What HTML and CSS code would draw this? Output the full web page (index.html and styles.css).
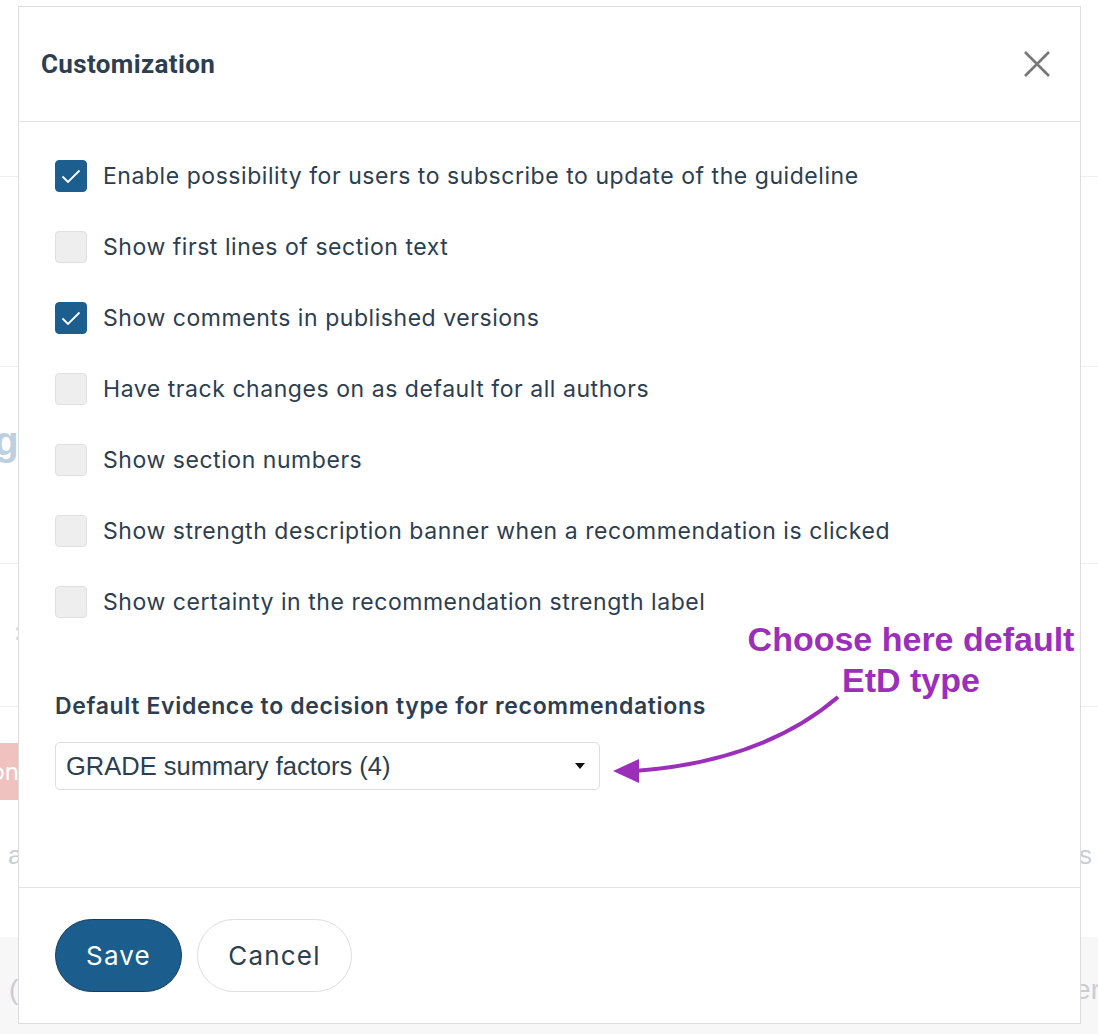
FILE: index.html
```html
<!DOCTYPE html>
<html>
<head>
<meta charset="utf-8">
<link rel="stylesheet" href="styles.css">
</head>
<body>
<div class="page">
  <div class="bg-row bg-r1"></div>
  <div class="bg-row bg-r2"></div>
  <div class="bg-row bg-r3"><span class="bg-heading">Manage</span></div>
  <div class="bg-row bg-r4"><span class="bg-colon">:</span></div>
  <div class="bg-row bg-r5">
    <div class="bg-badge">Recommendation</div>
    <div class="bg-pair"><span class="bg-faint">a</span><span class="bg-faint">s</span></div>
  </div>
  <div class="bg-foot"><span class="bg-faint">(</span><span class="bg-faint">er</span></div>

  <div class="modal">
    <div class="modal-header">
      <h2 class="modal-title">Customization</h2>
      <button class="close-btn" aria-label="Close">
        <svg width="28" height="28" viewBox="0 0 28 28"><path d="M2 2 L26 26 M26 2 L2 26" stroke="#777" stroke-width="2.6" fill="none"/></svg>
      </button>
    </div>
    <div class="modal-body">
      <ul class="options">
        <li class="option"><span class="cb checked"><svg width="32" height="32" viewBox="0 0 32 32"><path d="M7.5 16.5 L13 22 L24.5 10.5" stroke="#fff" stroke-width="1.8" fill="none"/></svg></span>Enable possibility for users to subscribe to update of the guideline</li>
        <li class="option"><span class="cb"></span>Show first lines of section text</li>
        <li class="option"><span class="cb checked"><svg width="32" height="32" viewBox="0 0 32 32"><path d="M7.5 16.5 L13 22 L24.5 10.5" stroke="#fff" stroke-width="1.8" fill="none"/></svg></span>Show comments in published versions</li>
        <li class="option"><span class="cb"></span>Have track changes on as default for all authors</li>
        <li class="option"><span class="cb"></span>Show section numbers</li>
        <li class="option"><span class="cb"></span>Show strength description banner when a recommendation is clicked</li>
        <li class="option"><span class="cb"></span>Show certainty in the recommendation strength label</li>
      </ul>
      <div class="field-label">Default Evidence to decision type for recommendations</div>
      <div class="select">
        <span>GRADE summary factors (4)</span>
        <span class="caret"></span>
      </div>
    </div>
    <div class="modal-footer">
      <button class="btn btn-primary">Save</button>
      <button class="btn btn-default">Cancel</button>
    </div>
  </div>

  <div class="note">Choose here default<br>EtD type</div>
  <svg class="arrow" width="1098" height="1034" viewBox="0 0 1098 1034">
    <path d="M838 697 Q 762 762 634 771" stroke="#9b2fba" stroke-width="4" fill="none"/>
    <path d="M613 771 L639 759 L639 783 Z" fill="#9b2fba"/>
  </svg>
</div>
</body>
</html>
```
FILE: styles.css
```css
html, body {
  margin: 0;
  padding: 0;
}
body {
  font-family: Inter, "Noto Sans", sans-serif;
  color: #2c3e50;
  background: #fff;
  width: 1098px;
  height: 1034px;
  overflow: hidden;
}
.page {
  position: relative;
  width: 1098px;
  height: 1034px;
  overflow: hidden;
}
.bg-row {
  border-bottom: 1px solid #f0f0f0;
  box-sizing: border-box;
  display: flex;
  align-items: center;
  overflow: hidden;
  white-space: nowrap;
}
.bg-r1 { height: 177px; }
.bg-r2 { height: 190px; }
.bg-r3 { height: 197px; }
.bg-r4 { height: 143px; }
.bg-r5 {
  height: 230px;
  border-bottom: none;
  flex-direction: column;
  align-items: stretch;
  justify-content: flex-start;
}
.bg-heading {
  font-family: "Liberation Sans", sans-serif;
  font-weight: bold;
  font-size: 40px;
  color: #bcd0e2;
  margin-left: -108px;
  margin-top: -48px;
}
.bg-colon {
  font-size: 24px;
  color: #d8dbe0;
  margin-left: 14px;
  margin-top: -8px;
}
.bg-badge {
  margin-top: 36px;
  height: 57px;
  width: 260px;
  margin-left: -241px;
  background: #efc2bf;
  color: #fff;
  font-size: 24px;
  display: flex;
  align-items: center;
  justify-content: flex-end;
  padding-right: 0;
  box-sizing: border-box;
}
.bg-pair {
  display: flex;
  justify-content: space-between;
  margin-top: 40px;
  padding-left: 8px;
  padding-right: 6px;
  font-size: 26px;
  line-height: 30px;
}
.bg-faint {
  color: #c9ccd2;
  font-family: "Liberation Sans", sans-serif;
}
.bg-foot {
  height: 97px;
  background: #f7f7f7;
  display: flex;
  justify-content: space-between;
  align-items: center;
  font-size: 28px;
  padding-left: 9px;
  padding-right: 0;
  margin-right: -2px;
  box-sizing: border-box;
  padding-top: 8px;
}

/* modal */
.modal {
  position: absolute;
  top: 6px;
  left: 18px;
  width: 1063px;
  height: 1018px;
  box-sizing: border-box;
  background: #fff;
  border: 1px solid #dcdcdc;
  display: flex;
  flex-direction: column;
}
.modal-header {
  height: 115px;
  box-sizing: border-box;
  border-bottom: 1px solid #e3e3e3;
  display: flex;
  align-items: center;
  justify-content: space-between;
  padding: 0 29px 0 22px;
}
.modal-title {
  margin: 0;
  font-family: Roboto, "Liberation Sans", sans-serif;
  font-weight: bold;
  font-size: 26px;
  color: #2c3e50;
  letter-spacing: 0.35px;
}
.close-btn {
  border: 0;
  background: none;
  padding: 0;
  width: 28px;
  height: 28px;
  display: flex;
}
.modal-body {
  flex: 1;
  padding: 38px 36px 0 36px;
}
.options {
  list-style: none;
  margin: 0;
  padding: 0;
  display: flex;
  flex-direction: column;
  gap: 39px;
}
.option {
  display: flex;
  align-items: center;
  height: 32px;
  font-size: 23px;
  color: #2c3e50;
  letter-spacing: 0.55px;
  white-space: nowrap;
}
.cb {
  width: 32px;
  height: 32px;
  box-sizing: border-box;
  border-radius: 4px;
  background: #eeeeee;
  border: 1px solid #e0e0e0;
  margin-right: 16px;
  flex: none;
  display: flex;
}
.cb.checked {
  background: #1c5e8e;
  border-color: #1c5e8e;
}
.cb.checked svg {
  margin: -1px;
}
.field-label {
  margin-top: 73px;
  font-weight: 600;
  font-size: 23px;
  line-height: 30px;
  color: #2c3e50;
  letter-spacing: 0.65px;
  white-space: nowrap;
}
.select {
  margin-top: 21px;
  width: 545px;
  height: 48px;
  box-sizing: border-box;
  border: 1px solid #dddddd;
  border-radius: 5px;
  display: flex;
  align-items: center;
  justify-content: space-between;
  padding: 0 14px 0 10px;
  font-family: "Liberation Sans", Arial, sans-serif;
  font-size: 25.5px;
  color: #2c3e50;
}
.caret {
  width: 0;
  height: 0;
  border-left: 5px solid transparent;
  border-right: 5px solid transparent;
  border-top: 6px solid #111;
}
.modal-footer {
  height: 136px;
  box-sizing: border-box;
  border-top: 1px solid #e3e3e3;
  display: flex;
  align-items: flex-start;
  gap: 15px;
  padding: 31px 36px 0 36px;
}
.btn {
  height: 73px;
  border-radius: 37px;
  font-family: Inter, sans-serif;
  font-size: 26px;
  letter-spacing: 1.2px;
  box-sizing: border-box;
}
.btn-primary {
  width: 127px;
  background: #1b5e8e;
  border: 1px solid #1a3c56;
  color: #fff;
}
.btn-default {
  width: 155px;
  background: #fff;
  border: 1px solid #dedede;
  color: #2c3e50;
}

.note {
  position: absolute;
  left: 711px;
  width: 400px;
  top: 619px;
  text-align: center;
  font-family: "Liberation Sans", Arial, sans-serif;
  font-weight: bold;
  font-size: 34px;
  line-height: 41px;
  color: #9b2fba;
}
.arrow {
  position: absolute;
  left: 0;
  top: 0;
  pointer-events: none;
}
```
